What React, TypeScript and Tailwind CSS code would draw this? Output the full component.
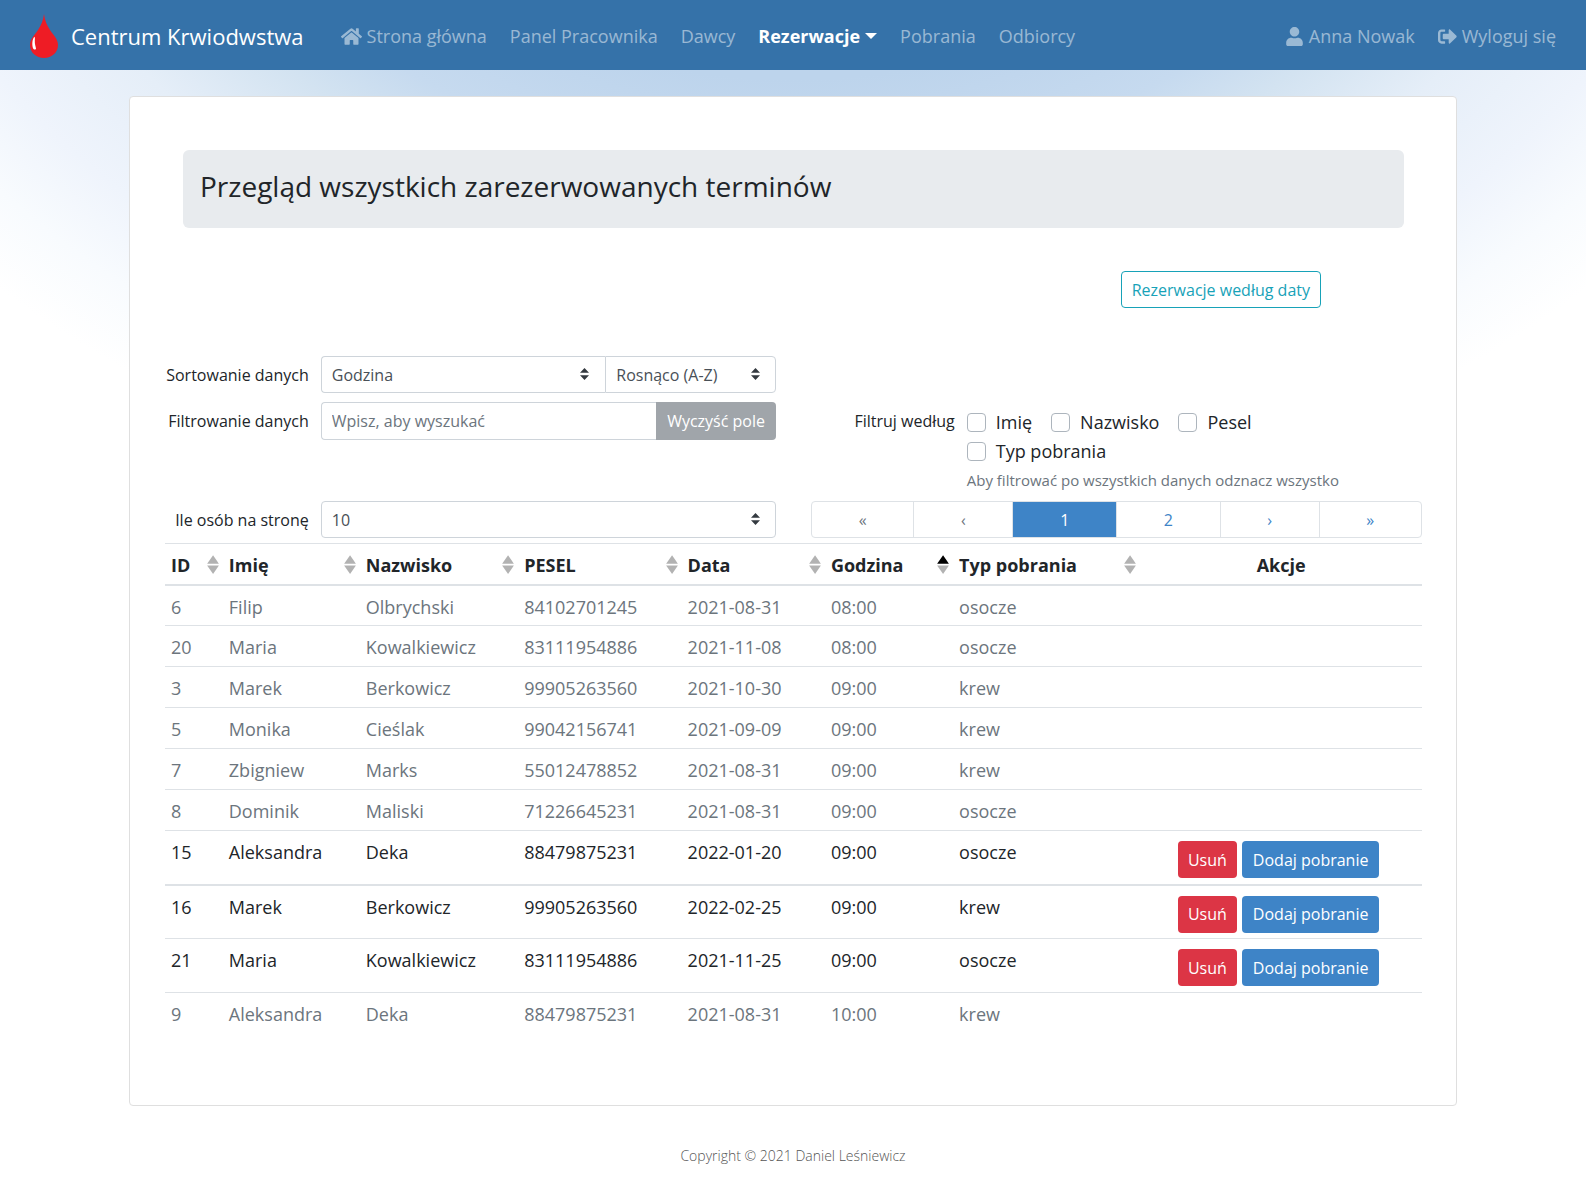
import { useState } from "react";
import type { ReactNode } from "react";
import { FaHome, FaSignOutAlt, FaUser } from "react-icons/fa";

type Row = {
  id: number;
  first: string;
  last: string;
  pesel: string;
  date: string;
  time: string;
  kind: string;
  open?: boolean;
  marked?: boolean;
};

const rows: Row[] = [
  { id: 6, first: "Filip", last: "Olbrychski", pesel: "84102701245", date: "2021-08-31", time: "08:00", kind: "osocze" },
  { id: 20, first: "Maria", last: "Kowalkiewicz", pesel: "83111954886", date: "2021-11-08", time: "08:00", kind: "osocze" },
  { id: 3, first: "Marek", last: "Berkowicz", pesel: "99905263560", date: "2021-10-30", time: "09:00", kind: "krew" },
  { id: 5, first: "Monika", last: "Cieślak", pesel: "99042156741", date: "2021-09-09", time: "09:00", kind: "krew" },
  { id: 7, first: "Zbigniew", last: "Marks", pesel: "55012478852", date: "2021-08-31", time: "09:00", kind: "krew" },
  { id: 8, first: "Dominik", last: "Maliski", pesel: "71226645231", date: "2021-08-31", time: "09:00", kind: "osocze" },
  { id: 15, first: "Aleksandra", last: "Deka", pesel: "88479875231", date: "2022-01-20", time: "09:00", kind: "osocze", open: true },
  { id: 16, first: "Marek", last: "Berkowicz", pesel: "99905263560", date: "2022-02-25", time: "09:00", kind: "krew", open: true, marked: true },
  { id: 21, first: "Maria", last: "Kowalkiewicz", pesel: "83111954886", date: "2021-11-25", time: "09:00", kind: "osocze", open: true },
  { id: 9, first: "Aleksandra", last: "Deka", pesel: "88479875231", date: "2021-08-31", time: "10:00", kind: "krew" },
];

const columns = ["ID", "Imię", "Nazwisko", "PESEL", "Data", "Godzina", "Typ pobrania"];

function DropLogo() {
  return (
    <svg viewBox="0 0 28 44" className="h-11 w-7 shrink-0" aria-hidden="true">
      <path
        d="M14 0C14.6 6 16.800 11 20 16C23.500 21.500 28 25 28 31C28 38.500 21.800 44 14 44C6.200 44 0 38.500 0 31C0 25 4.500 21.500 8 16C11.200 11 13.400 6 14 0Z"
        fill="#ee1c25"
      />
      <path d="M4.400 22.800C2.200 25 1.800 31 3 34.200C3.600 35.800 6 36 6 34.600C5.600 32 4.600 30 4.800 26.500C4.900 25 5.200 23.500 4.400 22.800Z" fill="#fff" />
    </svg>
  );
}

function NavLink({ children }: { children: ReactNode }) {
  return (
    <a href="#" className="flex items-center gap-[5px] whitespace-nowrap text-white/50 hover:text-white/75">
      {children}
    </a>
  );
}

function SortMark({ ascending }: { ascending: boolean }) {
  return (
    <svg viewBox="0 0 101 101" preserveAspectRatio="none" className="h-[19px] w-3 shrink-0" aria-hidden="true">
      <path d="M51 1l25 23 24 22H1l25-22z" opacity={ascending ? 1 : 0.3} />
      <path d="M51 101l25-23 24-22H1l25 22z" opacity={0.3} />
    </svg>
  );
}

function Select({ id, label, options, className }: { id: string; label?: string; options: string[]; className: string }) {
  return (
    <div className="relative">
      <select
        id={id}
        aria-label={label}
        className={`h-[37px] w-full appearance-none border border-[#ced4da] bg-white pr-8 pl-[10px] text-base text-[#495057] ${className}`}
      >
        {options.map((option) => (
          <option key={option}>{option}</option>
        ))}
      </select>
      <svg viewBox="0 0 4 5" className="pointer-events-none absolute top-3 right-4 h-3 w-[9px]" fill="#343a40" preserveAspectRatio="none" aria-hidden="true">
        <path d="M2 0L0 2h4zm0 5L0 3h4z" />
      </svg>
    </div>
  );
}

function Check({ label }: { label: string }) {
  return (
    <label className="flex items-center gap-[10px] text-lg leading-7">
      <input type="checkbox" className="size-[19px] appearance-none rounded border border-[#adb5bd] bg-white checked:bg-[#3e84c7]" />
      {label}
    </label>
  );
}

export default function App() {
  const [query, setQuery] = useState("");
  const labelClass = "pt-[7px] text-right text-base whitespace-nowrap";
  const fieldGrid = "grid grid-cols-[minmax(0,24fr)_minmax(0,76fr)] gap-x-3";
  const pageLink = "flex h-[37px] flex-auto items-center justify-center border border-[#dee2e6] -ml-px px-3";

  return (
    <div className="min-h-screen bg-white bg-[radial-gradient(1116px_829px_at_50%_-294px,#bdd4ec_45%,#c6daef_56%,#d3e3f1_63%,#e5eef8_73%,#eff4fc_84%,#f8fbfe_92%,#ffffff_100%)] bg-no-repeat font-['Open_Sans',sans-serif] text-[#212529]">
      <header className="flex h-[70px] items-center bg-[#3572a9] px-[30px] pt-0.5 text-lg">
        <a href="#" className="mr-[37px] flex items-center gap-[13px] text-[22px] whitespace-nowrap text-white">
          <DropLogo />
          Centrum Krwiodwstwa
        </a>
        <nav className="flex flex-1 items-center gap-[23px]">
          <NavLink>
            <FaHome className="size-[21px]" />
            Strona główna
          </NavLink>
          <NavLink>Panel Pracownika</NavLink>
          <NavLink>Dawcy</NavLink>
          <button type="button" className="flex items-center gap-[5px] font-bold text-white">
            Rezerwacje
            <svg viewBox="0 0 12 6" className="h-[6px] w-3" fill="currentColor" aria-hidden="true">
              <path d="M0 0h12L6 6z" />
            </svg>
          </button>
          <NavLink>Pobrania</NavLink>
          <NavLink>Odbiorcy</NavLink>
          <div className="ml-auto flex gap-[23px]">
            <NavLink>
              <FaUser className="size-[19px]" />
              Anna Nowak
            </NavLink>
            <NavLink>
              <FaSignOutAlt className="size-[19px]" />
              Wyloguj się
            </NavLink>
          </div>
        </nav>
      </header>

      <main className="mx-auto mt-[26px] max-w-[1328px] rounded border border-[#dfdfdf] bg-white pt-[53px] pr-[34px] pb-[71px] pl-[35px]">
        <h1 className="mx-[18px] h-[78px] rounded-md bg-[#e8ebee] px-[17px] pt-[18px] text-[28px] leading-9 font-medium">
          Przegląd wszystkich zarezerwowanych terminów
        </h1>

        <div className="mt-[43px] flex justify-end pr-[101px]">
          <button type="button" className="h-[37px] rounded border border-[#17a2b8] px-[10px] text-base text-[#17a2b8]">
            Rezerwacje według daty
          </button>
        </div>

        <form className="mt-12 grid grid-cols-2 gap-x-[35px]">
          <div className={fieldGrid}>
            <label htmlFor="sort" className={labelClass}>Sortowanie danych</label>
            <div className="grid grid-cols-[5fr_3fr]">
              <Select id="sort" options={["Godzina", "Data", "Nazwisko"]} className="rounded-l border-r-0" />
              <Select id="direction" label="Kierunek sortowania" options={["Rosnąco (A-Z)", "Malejąco (Z-A)"]} className="rounded-r" />
            </div>
          </div>
          <div />

          <div className={`${fieldGrid} mt-[9px] items-start`}>
            <label htmlFor="filter" className={labelClass}>Filtrowanie danych</label>
            <div className="flex">
              <input
                id="filter"
                type="search"
                value={query}
                onChange={(event) => setQuery(event.target.value)}
                placeholder="Wpisz, aby wyszukać"
                className="h-[38px] min-w-0 flex-1 rounded-l border border-r-0 border-[#ced4da] bg-white px-[10px] text-base placeholder:text-[#6c757d]"
              />
              <button type="button" onClick={() => setQuery("")} className="h-[38px] rounded-r bg-[#a0a5aa] px-[11px] text-base text-white">
                Wyczyść pole
              </button>
            </div>
          </div>
          <fieldset className={`${fieldGrid} mt-[9px]`} aria-labelledby="filter-by">
            <div id="filter-by" className={labelClass}>Filtruj według</div>
            <div className="pt-[6px]">
              <div className="flex w-[300px] flex-wrap gap-x-[19px] gap-y-px">
                <Check label="Imię" />
                <Check label="Nazwisko" />
                <Check label="Pesel" />
                <Check label="Typ pobrania" />
              </div>
              <p className="mt-[3px] mb-[9px] text-[15px] leading-6 whitespace-nowrap text-[#6c757d]">Aby filtrować po wszystkich danych odznacz wszystko</p>
            </div>
          </fieldset>

          <div className={fieldGrid}>
            <label htmlFor="per-page" className={labelClass}>Ile osób na stronę</label>
            <Select id="per-page" options={["10", "20", "50"]} className="rounded" />
          </div>
          <nav aria-label="Strony" className="flex pl-px text-base text-[#3e84c7]">
            <button type="button" disabled className={`${pageLink} rounded-l text-[#6c757d]`}>«</button>
            <button type="button" disabled className={`${pageLink} text-[#6c757d]`}>‹</button>
            <button type="button" aria-current="page" className={`${pageLink} border-[#3e84c7] bg-[#3e84c7] text-white`}>1</button>
            <button type="button" className={pageLink}>2</button>
            <button type="button" className={pageLink}>›</button>
            <button type="button" className={`${pageLink} rounded-r`}>»</button>
          </nav>
        </form>

        <table className="mt-[5px] w-full table-fixed border-collapse text-lg leading-7">
          <colgroup>
            <col className="w-[4.6%]" />
            <col className="w-[10.9%]" />
            <col className="w-[12.6%]" />
            <col className="w-[13%]" />
            <col className="w-[11.4%]" />
            <col className="w-[10.2%]" />
            <col className="w-[14.9%]" />
            <col />
          </colgroup>
          <thead>
            <tr className="h-[41px] border-t border-b-2 border-[#dee2e6]">
              {columns.map((column) => (
                <th key={column} scope="col" aria-sort={column === "Godzina" ? "ascending" : "none"} className="pt-0.5 pr-1 pl-[6px] text-left font-bold">
                  <div className="flex items-center justify-between">
                    {column}
                    <SortMark ascending={column === "Godzina"} />
                  </div>
                </th>
              ))}
              <th scope="col" className="pt-0.5 text-center font-bold">Akcje</th>
            </tr>
          </thead>
          <tbody>
            {rows.map((row) => (
              <tr
                key={row.id}
                className={`align-top ${row.open ? "h-[54px]" : "h-[41px] text-[#6c757d]"} ${row.marked ? "border-t-2" : "border-t"} border-[#dee2e6]`}
              >
                <td className="px-[6px] pt-[7px]">{row.id}</td>
                <td className="px-[6px] pt-[7px]">{row.first}</td>
                <td className="px-[6px] pt-[7px]">{row.last}</td>
                <td className="px-[6px] pt-[7px]">{row.pesel}</td>
                <td className="px-[6px] pt-[7px]">{row.date}</td>
                <td className="px-[6px] pt-[7px]">{row.time}</td>
                <td className="px-[6px] pt-[7px]">{row.kind}</td>
                <td>
                  {row.open && (
                    <div className="flex justify-center gap-[5px] pt-[10px] pr-[5px] text-base text-white">
                      <button type="button" className="h-[37px] rounded bg-[#dc3545] px-[10px]">Usuń</button>
                      <button type="button" className="h-[37px] rounded bg-[#3e84c7] px-[11px]">Dodaj pobranie</button>
                    </div>
                  )}
                </td>
              </tr>
            ))}
          </tbody>
        </table>
      </main>

      <footer className="pt-10 pb-3 text-center text-sm font-light text-[#555]">Copyright © 2021 Daniel Leśniewicz</footer>
    </div>
  );
}
